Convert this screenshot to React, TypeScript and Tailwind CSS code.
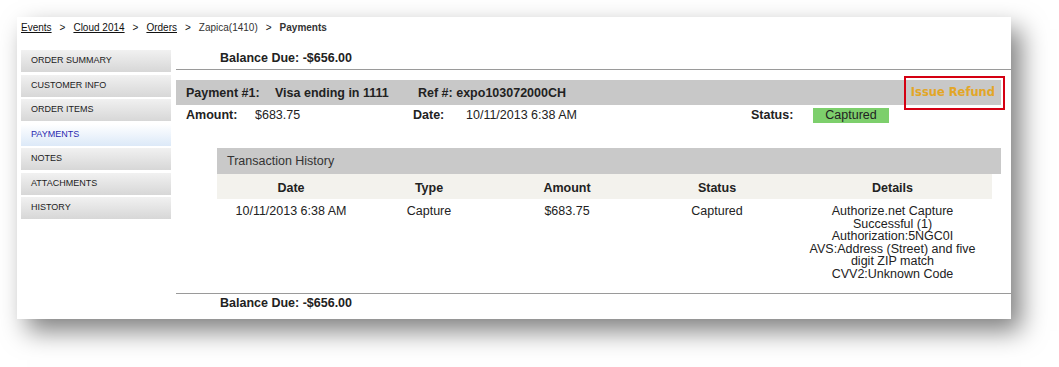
import React from "react";

const navItems = [
  "ORDER SUMMARY",
  "CUSTOMER INFO",
  "ORDER ITEMS",
  "PAYMENTS",
  "NOTES",
  "ATTACHMENTS",
  "HISTORY",
];

export default function App() {
  return (
    <div className="min-h-[367px] w-[1059px] bg-white pt-[17px] pl-[17px] font-['Liberation_Sans',Arial,sans-serif] text-[#222]">
      <div className="w-[994px] bg-white shadow-[10px_12px_24px_rgba(0,0,0,0.5)]">
        {/* breadcrumb */}
        <div className="flex pl-[4px] pt-[5px] text-[10px] leading-[12px] text-[#111]">
          <span className="underline">Events</span>
          <span className="px-[8px]">&gt;</span>
          <span className="underline">Cloud 2014</span>
          <span className="px-[8px]">&gt;</span>
          <span className="underline">Orders</span>
          <span className="px-[8px]">&gt;</span>
          <span className="text-[#333]">Zapica(1410)</span>
          <span className="px-[8px]">&gt;</span>
          <span className="font-bold text-[#333]">Payments</span>
        </div>

        <div className="mt-[13px] flex">
          {/* sidebar */}
          <div className="ml-[4px] mt-[3px] flex w-[150px] flex-col gap-[2.5px]">
            {navItems.map((item) => (
              <div
                key={item}
                className={
                  item === "PAYMENTS"
                    ? "flex h-[22px] items-center bg-gradient-to-b from-[#ffffff] to-[#dce9f8] pl-[10px] text-[9px] text-[#2a2ab0]"
                    : "flex h-[22px] items-center bg-gradient-to-b from-[#f1f1f1] to-[#d7d7d7] pl-[10px] text-[9px] text-[#222]"
                }
              >
                {item}
              </div>
            ))}
          </div>

          {/* main */}
          <div className="ml-[5px] flex-1">
            <div className="border-b border-[#9a9a9a] pb-[3px] pl-[44px] pt-[3px] text-[12.5px] font-bold leading-[16px] text-[#222]">
              Balance Due: -$656.00
            </div>

            {/* payment bar */}
            <div className="relative mt-[10px] flex h-[25px] w-[825px] items-center bg-[#c8c8c8] pl-[10px] pt-[1px] text-[12.5px] font-bold text-[#222]">
              <span className="w-[89px]">Payment #1:</span>
              <span className="w-[143px]">Visa ending in 1111</span>
              <span>Ref #: expo103072000CH</span>
              <span className="ml-auto pr-[6px] font-['DejaVu_Sans',Verdana,sans-serif] text-[11.5px] font-bold text-[#e3a626]">
                Issue Refund
              </span>
              <div className="absolute -right-[4px] -top-[4px] h-[34px] w-[101px] border-2 border-[#d40012]" />
            </div>

            {/* amount row */}
            <div className="flex h-[21px] items-center pl-[10px] text-[12.5px] text-[#222]">
              <span className="w-[69px] font-bold">Amount:</span>
              <span className="w-[158px]">$683.75</span>
              <span className="w-[53px] font-bold">Date:</span>
              <span className="w-[285px]">10/11/2013 6:38 AM</span>
              <span className="w-[62px] font-bold">Status:</span>
              <span className="flex h-[15px] w-[76px] items-center justify-center bg-[#7dcf6c] text-[#222]">
                Captured
              </span>
            </div>

            {/* transaction history */}
            <div className="ml-[41px] mt-[22px] w-[784px] text-[12.5px]">
              <div className="flex h-[26px] items-center bg-[#c9c9c9] pl-[10px] pt-[1px] text-[#333]">
                Transaction History
              </div>
              <div className="grid h-[25px] w-[775px] grid-cols-[148px_128px_148px_152px_199px] items-center bg-[#f3f2ed] pt-[4px] text-center font-bold text-[#222]">
                <span>Date</span>
                <span>Type</span>
                <span>Amount</span>
                <span>Status</span>
                <span>Details</span>
              </div>
              <div className="grid w-[775px] grid-cols-[148px_128px_148px_152px_199px] pt-[6px] text-center leading-[12.6px] text-[#222]">
                <span>10/11/2013 6:38 AM</span>
                <span>Capture</span>
                <span>$683.75</span>
                <span>Captured</span>
                <div className="flex flex-col">
                  <span>Authorize.net Capture</span>
                  <span>Successful (1)</span>
                  <span>Authorization:5NGC0I</span>
                  <span>AVS:Address (Street) and five</span>
                  <span>digit ZIP match</span>
                  <span>CVV2:Unknown Code</span>
                </div>
              </div>
            </div>

            <div className="mt-[12px] border-t border-[#9a9a9a] pb-[8px] pl-[44px] pt-[1px] text-[12.5px] font-bold leading-[16px] text-[#222]">
              Balance Due: -$656.00
            </div>
          </div>
        </div>
      </div>
    </div>
  );
}
